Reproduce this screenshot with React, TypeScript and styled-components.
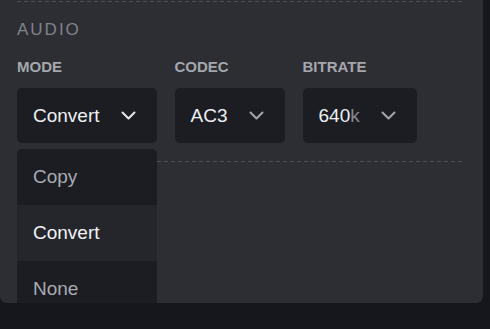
import React from "react";
import styled, { createGlobalStyle } from "styled-components";

const GlobalStyle = createGlobalStyle`
  html, body {
    margin: 0;
    padding: 0;
    background: #16171c;
    font-family: "Liberation Sans", Arial, sans-serif;
  }
`;

const Panel = styled.div`
  width: 483px;
  height: 303px;
  box-sizing: border-box;
  background: #2d2e33;
  border-radius: 0 0 7px 7px;
  padding: 0 21px 0 17px;
`;

const Divider = styled.div`
  height: 2px;
  background-image: linear-gradient(to right, #4f5157 0 4px, transparent 4px 7px);
  background-size: 7px 1px;
  background-repeat: repeat-x;
  background-position: 0 bottom;
`;

const Section = styled.section`
  padding: 18px 0 17px;
`;

const Heading = styled.h3`
  margin: 0;
  font-size: 17px;
  line-height: 20px;
  font-weight: 400;
  letter-spacing: 2px;
  color: #80838b;
  text-transform: uppercase;
`;

const FieldRow = styled.div`
  display: flex;
  gap: 18px;
  margin-top: 18px;
`;

const Field = styled.div`
  position: relative;
  display: flex;
  flex-direction: column;
  gap: 12px;
`;

const Label = styled.label`
  font-size: 15px;
  line-height: 18px;
  font-weight: 700;
  color: #a4a7ae;
  text-transform: uppercase;
`;

const SelectBox = styled.div`
  display: flex;
  align-items: center;
  gap: 21px;
  height: 55px;
  box-sizing: border-box;
  padding: 0 21px 0 16px;
  background: #1b1d22;
  border-radius: 5px;
  font-size: 19px;
  color: #eef0f4;
`;

const Suffix = styled.span`
  color: #868990;
`;

const Chevron = styled.svg<{ $open?: boolean }>`
  width: 15px;
  height: 9px;
  flex: none;
  stroke: ${p => (p.$open ? "#e6e8ec" : "#a3a6ad")};
`;

const Menu = styled.ul`
  position: absolute;
  top: calc(100% + 6px);
  left: 0;
  right: 0;
  margin: 0;
  padding: 0;
  list-style: none;
  background: #1b1d22;
  border-radius: 5px;
  overflow: hidden;
  z-index: 2;
`;

const MenuItem = styled.li<{ $active?: boolean }>`
  height: 56px;
  display: flex;
  align-items: center;
  padding: 0 16px;
  font-size: 19px;
  color: ${p => (p.$active ? "#f2f3f6" : "#a8abb2")};
  background: ${p => (p.$active ? "#24262c" : "transparent")};
`;

const ChevronIcon: React.FC<{ open?: boolean }> = ({ open }) => (
  <Chevron $open={open} viewBox="0 0 15 9" fill="none" strokeWidth={2} strokeLinecap="round" strokeLinejoin="round">
    <path d="M1.5 1.5 L7.5 7.5 L13.5 1.5" />
  </Chevron>
);

export default function App() {
  return (
    <>
      <GlobalStyle />
      <Panel>
        <Divider />
        <Section>
          <Heading>Audio</Heading>
          <FieldRow>
            <Field>
              <Label>Mode</Label>
              <SelectBox>
                <span>Convert</span>
                <ChevronIcon open />
              </SelectBox>
              <Menu>
                <MenuItem>Copy</MenuItem>
                <MenuItem $active>Convert</MenuItem>
                <MenuItem>None</MenuItem>
              </Menu>
            </Field>
            <Field>
              <Label>Codec</Label>
              <SelectBox>
                <span>AC3</span>
                <ChevronIcon />
              </SelectBox>
            </Field>
            <Field>
              <Label>Bitrate</Label>
              <SelectBox>
                <span>
                  640<Suffix>k</Suffix>
                </span>
                <ChevronIcon />
              </SelectBox>
            </Field>
          </FieldRow>
        </Section>
        <Divider />
      </Panel>
    </>
  );
}
